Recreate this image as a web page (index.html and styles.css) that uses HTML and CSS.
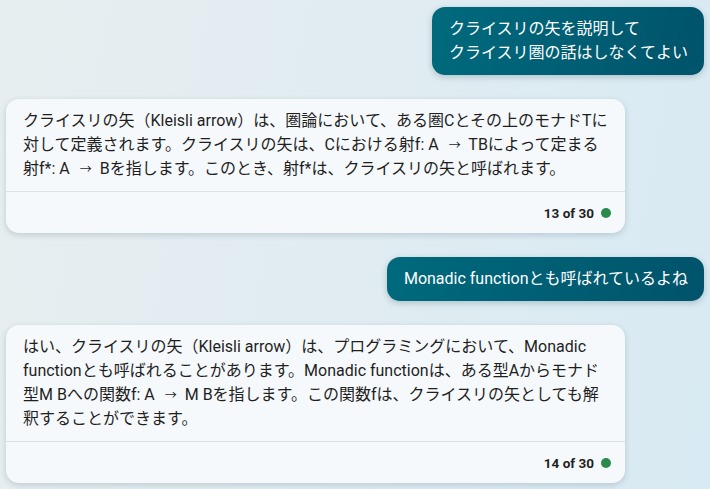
FILE: index.html
```html
<!DOCTYPE html>
<html lang="ja">
<head>
<meta charset="utf-8">
<link rel="stylesheet" href="styles.css">
</head>
<body>
<div class="chat">
  <div class="msg user">
    <div class="bubble-user">クライスリの矢を説明して<br>クライスリ圏の話はしなくてよい</div>
  </div>
  <div class="msg bot">
    <div class="bubble-bot">
      <div class="bot-text">クライスリの矢（Kleisli arrow）は、圏論において、ある圏Cとその上のモナドTに対して定義されます。クライスリの矢は、Cにおける射f: A <span class="arr">→</span> TBによって定まる射f*: A <span class="arr">→</span> Bを指します。このとき、射f*は、クライスリの矢と呼ばれます。</div>
      <div class="bot-foot"><span class="count">13 of 30</span><span class="dot"></span></div>
    </div>
  </div>
  <div class="msg user">
    <div class="bubble-user">Monadic functionとも呼ばれているよね</div>
  </div>
  <div class="msg bot">
    <div class="bubble-bot">
      <div class="bot-text">はい、クライスリの矢（Kleisli arrow）は、プログラミングにおいて、Monadic functionとも呼ばれることがあります。Monadic functionは、ある型Aからモナド型M Bへの関数f: A <span class="arr">→</span> M Bを指します。この関数fは、クライスリの矢としても解釈することができます。</div>
      <div class="bot-foot"><span class="count">14 of 30</span><span class="dot"></span></div>
    </div>
  </div>
</div>
</body>
</html>
```
FILE: styles.css
```css
html, body {
  margin: 0;
  padding: 0;
}
body {
  width: 710px;
  height: 489px;
  overflow: hidden;
  background: linear-gradient(100deg, #e7eef0 0%, #e0ecf1 50%, #d8eaf3 100%);
  font-family: Roboto, "Noto Sans CJK JP", sans-serif;
  font-size: 16px;
  line-height: 24px;
}
.chat {
  display: flex;
  flex-direction: column;
  gap: 24px;
  padding: 7px 6px 0 6px;
}
.msg {
  display: flex;
}
.msg.user {
  justify-content: flex-end;
}
.msg.bot {
  justify-content: flex-start;
}
.bubble-user {
  background: linear-gradient(100deg, #006a7d 0%, #005f74 50%, #00536a 100%);
  color: #ffffff;
  padding: 10px 16px 10px 17px;
  border-radius: 13px;
  box-shadow: 0 2px 6px rgba(0, 40, 60, 0.22);
}
.bubble-bot {
  width: 619px;
  background: #f6f9fb;
  border-radius: 13px;
  box-shadow: 0 2px 6px rgba(20, 50, 70, 0.18);
  color: #1f1f1f;
}
.bot-text {
  padding: 10px 17px;
  border-bottom: 1px solid #dce2e5;
}
.arr {
  display: inline-block;
  width: 18px;
  padding-right: 4px;
  text-align: right;
  font-size: 12px;
  line-height: 16px;
}
.bot-foot {
  height: 41px;
  display: flex;
  align-items: center;
  justify-content: flex-end;
  gap: 7px;
  padding-right: 14px;
}
.count {
  font-size: 13.5px;
  font-weight: 700;
  color: #1f1f1f;
}
.dot {
  width: 10px;
  height: 10px;
  border-radius: 50%;
  background: #2a8a4c;
}
```
